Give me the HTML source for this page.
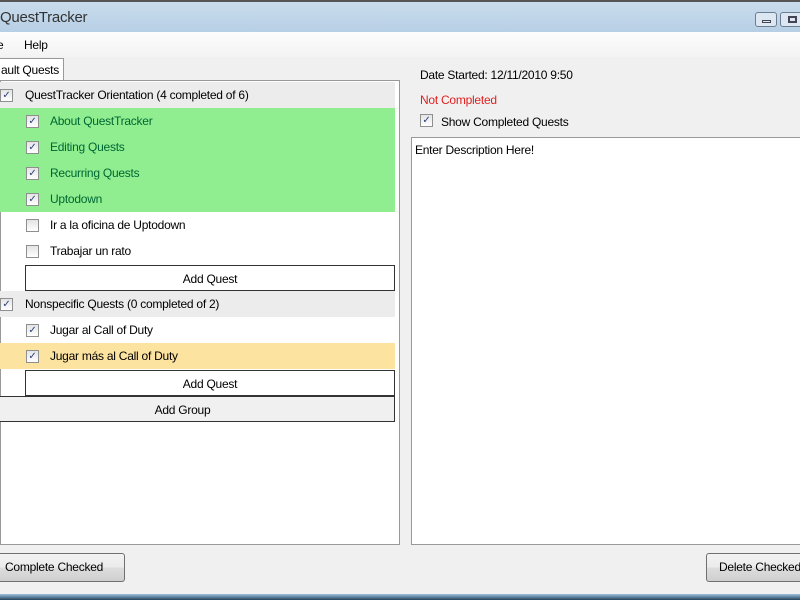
<!DOCTYPE html>
<html><head><style>
*{margin:0;padding:0;box-sizing:border-box}
body{width:800px;height:600px;overflow:hidden;background:#f0f0f0;font-family:"Liberation Sans",sans-serif;font-size:12px;letter-spacing:-0.25px;color:#000;position:relative}
.a{position:absolute}
.title{left:0;top:0;width:800px;height:32px;background:linear-gradient(#c9dcec,#b7cfe5);border-top:2px solid #555}
.menu{left:0;top:32px;width:800px;height:25px;background:linear-gradient(#fdfdfd,#f3f3f3)}
.row{position:absolute;left:0;width:395px;height:26px;line-height:27px}
.cb{position:absolute;width:13px;height:13px;border:1px solid #8e8f8f;background:linear-gradient(#e4e4e4,#fff);top:7px;font-size:10px;line-height:11px;text-align:center;color:#2a3f7a}
.btn{position:absolute;background:#fff;border:1px solid #333;text-align:center;height:26px;line-height:26px}
.pb{position:absolute;border:1px solid #707070;border-radius:3px;background:linear-gradient(#f2f2f2,#ebebeb 50%,#dddddd 51%,#cfcfcf);height:29px;line-height:27px;text-align:center}
</style></head><body>
<div class="a title"><span class="a" style="left:0;top:7px;font-size:15px;color:#333">QuestTracker</span>
<div class="a" style="left:755px;top:10px;width:22px;height:15px;border:1px solid #6b7d91;border-radius:3px;background:#dce7f1"><div class="a" style="left:6px;top:7px;width:9px;height:3px;border:1px solid #445"></div></div>
<div class="a" style="left:780px;top:10px;width:22px;height:15px;border:1px solid #6b7d91;border-radius:3px;background:#dce7f1"><div class="a" style="left:7px;top:3px;width:9px;height:7px;border:2px solid #445"></div></div>
</div>
<div class="a menu"><span class="a" style="left:-3px;top:6px">e</span><span class="a" style="left:24px;top:6px">Help</span></div>
<div class="a" style="left:-5px;top:58px;width:69px;height:23px;background:#fff;border:1px solid #999;border-bottom:none;padding:4px 0 0 5px">ault Quests</div>
<div class="a" style="left:0;top:80px;width:400px;height:465px;background:#fff;border:1px solid #999"></div>
<div class="row" style="top:82px;background:#ececec"><div class="cb" style="left:0">✓</div><span class="a" style="left:25px">QuestTracker Orientation (4 completed of 6)</span></div>
<div class="row" style="top:108px;background:#90ee90;height:104px"></div>
<div class="row" style="top:108px"><div class="cb" style="left:26px">✓</div><span class="a" style="left:50px;color:#063">About QuestTracker</span></div>
<div class="row" style="top:134px"><div class="cb" style="left:26px">✓</div><span class="a" style="left:50px;color:#063">Editing Quests</span></div>
<div class="row" style="top:160px"><div class="cb" style="left:26px">✓</div><span class="a" style="left:50px;color:#063">Recurring Quests</span></div>
<div class="row" style="top:186px"><div class="cb" style="left:26px">✓</div><span class="a" style="left:50px;color:#063">Uptodown</span></div>
<div class="row" style="top:212px"><div class="cb" style="left:26px"></div><span class="a" style="left:50px">Ir a la oficina de Uptodown</span></div>
<div class="row" style="top:238px"><div class="cb" style="left:26px"></div><span class="a" style="left:50px">Trabajar un rato</span></div>
<div class="btn" style="left:25px;top:265px;width:370px">Add Quest</div>
<div class="row" style="top:291px;background:#ececec"><div class="cb" style="left:0">✓</div><span class="a" style="left:25px">Nonspecific Quests (0 completed of 2)</span></div>
<div class="row" style="top:317px"><div class="cb" style="left:26px">✓</div><span class="a" style="left:50px">Jugar al Call of Duty</span></div>
<div class="row" style="top:343px;background:#fde3a0"><div class="cb" style="left:26px">✓</div><span class="a" style="left:50px">Jugar más al Call of Duty</span></div>
<div class="btn" style="left:25px;top:370px;width:370px">Add Quest</div>
<div class="btn" style="left:-30px;top:396px;width:425px;background:#f0f0f0">Add Group</div>
<span class="a" style="left:420px;top:68px">Date Started: 12/11/2010 9:50</span>
<span class="a" style="left:420px;top:93px;color:#e02020">Not Completed</span>
<div class="cb" style="left:420px;top:114px">✓</div><span class="a" style="left:441px;top:115px">Show Completed Quests</span>
<div class="a" style="left:411px;top:137px;width:395px;height:408px;background:#fff;border:1px solid #999;padding:5px 3px">Enter Description Here!</div>
<div class="pb" style="left:-8px;top:553px;width:133px;text-align:left;padding-left:12px">Complete Checked</div>
<div class="pb" style="left:706px;top:553px;width:110px;text-align:left;padding-left:12px">Delete Checked</div>
<div class="a" style="left:0;top:594px;width:800px;height:6px;background:linear-gradient(#9cc3e0,#25425a)"></div>
</body></html>
